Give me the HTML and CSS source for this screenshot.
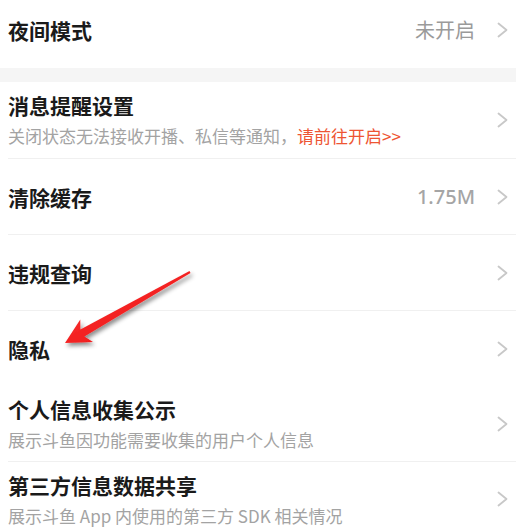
FILE: index.html
```html
<!DOCTYPE html>
<html lang="zh-CN">
<head>
<meta charset="utf-8">
<link rel="stylesheet" href="styles.css">
</head>
<body>
<div class="screen">
  <div class="row row-first">
    <div class="main"><div class="title">夜间模式</div></div>
    <div class="value">未开启</div>
    <svg class="chev" viewBox="0 0 12 16" width="12" height="16"><polyline points="1.5,1.5 9.5,8 1.5,14.5"/></svg>
  </div>
  <div class="band"></div>
  <div class="row row-two">
    <div class="main">
      <div class="title">消息提醒设置</div>
      <div class="sub">关闭状态无法接收开播、私信等通知，<span class="link">请前往开启&gt;&gt;</span></div>
    </div>
    <svg class="chev" viewBox="0 0 12 16" width="12" height="16"><polyline points="1.5,1.5 9.5,8 1.5,14.5"/></svg>
  </div>
  <div class="row row-one">
    <div class="main"><div class="title">清除缓存</div></div>
    <div class="value latin">1.75M</div>
    <svg class="chev" viewBox="0 0 12 16" width="12" height="16"><polyline points="1.5,1.5 9.5,8 1.5,14.5"/></svg>
  </div>
  <div class="row row-one">
    <div class="main"><div class="title">违规查询</div></div>
    <svg class="chev" viewBox="0 0 12 16" width="12" height="16"><polyline points="1.5,1.5 9.5,8 1.5,14.5"/></svg>
  </div>
  <div class="row row-one no-line">
    <div class="main"><div class="title">隐私</div></div>
    <svg class="chev" viewBox="0 0 12 16" width="12" height="16"><polyline points="1.5,1.5 9.5,8 1.5,14.5"/></svg>
  </div>
  <div class="row row-two row-sixth">
    <div class="main">
      <div class="title">个人信息收集公示</div>
      <div class="sub">展示斗鱼因功能需要收集的用户个人信息</div>
    </div>
    <svg class="chev" viewBox="0 0 12 16" width="12" height="16"><polyline points="1.5,1.5 9.5,8 1.5,14.5"/></svg>
  </div>
  <div class="row row-two row-last">
    <div class="main">
      <div class="title">第三方信息数据共享</div>
      <div class="sub">展示斗鱼 App 内使用的第三方 SDK 相关情况</div>
    </div>
    <svg class="chev" viewBox="0 0 12 16" width="12" height="16"><polyline points="1.5,1.5 9.5,8 1.5,14.5"/></svg>
  </div>

  <svg class="arrow" viewBox="0 0 516 532" width="516" height="532">
    <defs>
      <filter id="sh" x="-20%" y="-20%" width="140%" height="140%">
        <feDropShadow dx="2" dy="3" stdDeviation="2" flood-color="#000" flood-opacity="0.45"/>
      </filter>
      <linearGradient id="rg" x1="0" y1="0" x2="1" y2="1">
        <stop offset="0" stop-color="#ff3a3a"/>
        <stop offset="1" stop-color="#e80c0c"/>
      </linearGradient>
    </defs>
    <polygon filter="url(#sh)" fill="url(#rg)" points="189.5,271 80.4,329.6 80.3,319.4 65,343 93,342 84.4,336.6 190.5,273"/>
  </svg>
</div>
</body>
</html>
```

FILE: styles.css
```css
html, body {
  margin: 0;
  padding: 0;
  background: #ffffff;
}
body {
  font-family: "Noto Sans CJK SC", "Noto Sans", sans-serif;
  color: #1c1c1c;
}
.screen {
  position: relative;
  width: 516px;
  height: 532px;
  overflow: hidden;
}
.row {
  display: flex;
  align-items: center;
  padding: 0 7px 0 8px;
  box-sizing: border-box;
  position: relative;
}
.row::after {
  content: "";
  position: absolute;
  left: 8px;
  right: 0;
  bottom: 0;
  height: 1px;
  background: #f0f0f0;
}
.row-first::after,
.row-last::after,
.no-line::after {
  display: none;
}
.row-first {
  height: 68px;
  padding-bottom: 8px;
}
.row-one {
  height: 76px;
}
.row-two {
  height: 77px;
  padding-bottom: 2px;
}
.row-sixth {
  height: 75px;
}
.row-last {
  padding-bottom: 3px;
}
.main {
  flex: 1;
  min-width: 0;
}
.title {
  font-size: 21px;
  line-height: 28px;
  font-weight: 700;
  color: #1a1a1a;
  white-space: nowrap;
}
.sub {
  margin-top: 5px;
  font-size: 17px;
  line-height: 24px;
  color: #a3a3a3;
  white-space: nowrap;
}
.link {
  color: #ee5533;
}
.value {
  font-size: 20px;
  line-height: 28px;
  color: #9a9a9a;
  margin-right: 22px;
}
.value.latin {
  font-family: "Noto Sans", "Noto Sans CJK SC", sans-serif;
  font-weight: 500;
  color: #a5a5a5;
}
.chev {
  flex: none;
  display: block;
  width: 12px;
  height: 16px;
}
.chev polyline {
  fill: none;
  stroke: #c8c8c8;
  stroke-width: 1.8;
  stroke-linecap: round;
  stroke-linejoin: round;
}
.band {
  height: 14px;
  background: #f5f5f5;
}
.arrow {
  position: absolute;
  left: 0;
  top: 0;
  pointer-events: none;
}
```
